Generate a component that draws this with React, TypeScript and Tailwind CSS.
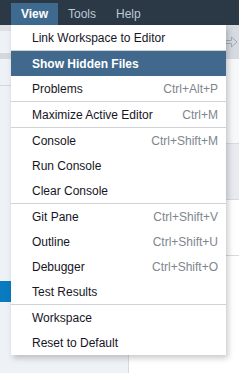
import React from "react";

type Item = { label: string; shortcut?: string; active?: boolean };

const groups: Item[][] = [
  [{ label: "Link Workspace to Editor" }],
  [{ label: "Show Hidden Files", active: true }, { label: "Problems", shortcut: "Ctrl+Alt+P" }],
  [{ label: "Maximize Active Editor", shortcut: "Ctrl+M" }],
  [
    { label: "Console", shortcut: "Ctrl+Shift+M" },
    { label: "Run Console" },
    { label: "Clear Console" },
  ],
  [
    { label: "Git Pane", shortcut: "Ctrl+Shift+V" },
    { label: "Outline", shortcut: "Ctrl+Shift+U" },
    { label: "Debugger", shortcut: "Ctrl+Shift+O" },
    { label: "Test Results" },
  ],
  [{ label: "Workspace" }, { label: "Reset to Default" }],
];

export default function App() {
  return (
    <div className="relative h-[373px] w-[239px] overflow-hidden bg-white font-['Liberation_Sans',Arial,sans-serif] text-[12px]">
      {/* menubar */}
      <div className="flex h-[25px] items-end bg-[#2b3846]">
        <div className="h-full w-[11px]" />
        <div className="flex h-[22px] w-[47px] items-center bg-[#3f6a90] pl-[10px] font-bold text-white">View</div>
        <div className="flex h-[22px] items-center pl-[10px] text-[#bccad7]">Tools</div>
        <div className="flex h-[22px] items-center pl-[20px] text-[#bccad7]">Help</div>
      </div>

      {/* workbench behind the menu */}
      <div className="flex h-[348px]">
        <div className="flex w-[129px] flex-col border-r border-[#d6dbe0] bg-[#eef1f5]">
          <div className="h-[6px] bg-[#dde1e6]" />
          <div className="h-[22px]" />
          <div className="h-[6px] bg-[#d5d9de]" />
          <div className="h-[27px] border-b border-[#d3d8dd]" />
          <div className="h-[195px]" />
          <div className="h-[21px] bg-[#0a7bc1]" />
        </div>
        <div className="flex flex-1 flex-col">
          <div className="flex h-[34px] items-center justify-end bg-[#d6dbe1] pr-[1px]">
            <svg width="13" height="12" viewBox="0 0 13 12" fill="none" stroke="#a3adb8" strokeWidth="1">
              <path d="M0.5 4.5h6v-3.5l5.5 5-5.5 5v-3.5h-6z" />
            </svg>
          </div>
          <div className="h-[85px] border-b border-[#d6dbe0] bg-[#f7f8fa]" />
          <div className="h-[56px] border-b border-[#d6dbe0] bg-[#e8ecf0]" />
          <div className="h-[56px] border-b border-[#d6dbe0] bg-white" />
          <div className="flex-1 bg-white" />
        </div>
      </div>

      {/* dropdown */}
      <div className="absolute left-[11px] top-[25px] w-[215px] bg-white shadow-[2px_3px_6px_rgba(0,0,0,0.22)]">
        {groups.map((g, gi) => (
          <div key={gi} className={gi > 0 ? "border-t border-[#cfd3d8]" : ""}>
            {g.map((it) => (
              <div
                key={it.label}
                className={`flex h-[25px] items-center justify-between pl-[21px] pr-[8px] ${
                  it.active ? "bg-[#41698e] font-bold text-white" : "text-[#151525]"
                }`}
              >
                <span>{it.label}</span>
                {it.shortcut && <span className="text-[#80868e]">{it.shortcut}</span>}
              </div>
            ))}
          </div>
        ))}
      </div>
    </div>
  );
}
